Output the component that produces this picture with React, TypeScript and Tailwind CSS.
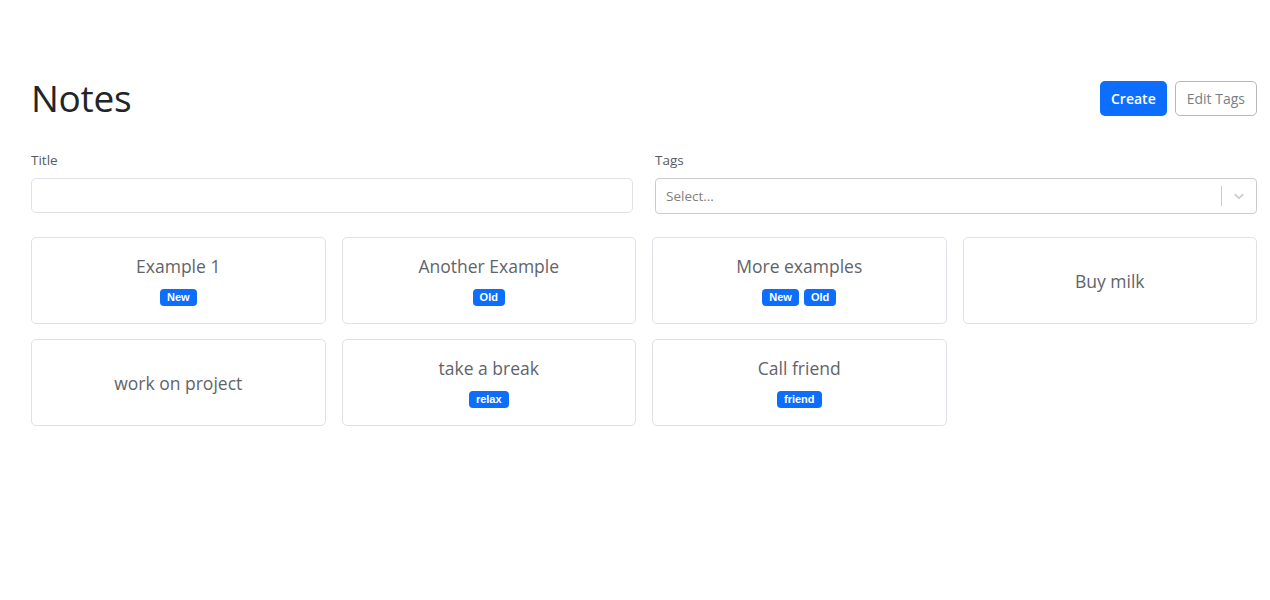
import React from "react";

type Note = { title: string; tags: string[] };

const notes: Note[] = [
  { title: "Example 1", tags: ["New"] },
  { title: "Another Example", tags: ["Old"] },
  { title: "More examples", tags: ["New", "Old"] },
  { title: "Buy milk", tags: [] },
  { title: "work on project", tags: [] },
  { title: "take a break", tags: ["relax"] },
  { title: "Call friend", tags: ["friend"] },
];

export default function App() {
  return (
    <div
      className="min-h-[600px] bg-white text-[#212529]"
      style={{ fontFamily: '"Open Sans", "Noto Sans", sans-serif' }}
    >
      <div className="px-[31px] pt-[74px] pr-[13px]">
        <div className="flex items-center justify-between h-[48px]">
          <h1 className="text-[37px] leading-[48px] font-normal text-[#212529] tracking-[-0.3px]">
            Notes
          </h1>
          <div className="flex gap-[8px]">
            <button className="h-[35px] px-[11px] rounded-[5px] bg-[#0d6efd] text-white text-[14px] font-semibold">
              Create
            </button>
            <button className="h-[35px] px-[11px] rounded-[5px] border border-[#b4b8bc] text-[#7a7f84] text-[14px] bg-white">
              Edit Tags
            </button>
          </div>
        </div>

        <div className="grid grid-cols-2 gap-[22px] mt-[28px]">
          <div>
            <div className="text-[13.5px] leading-[21px] text-[#555b61] mb-[7px]">Title</div>
            <div className="h-[35px] rounded-[5px] border border-[#dee2e6] bg-white" />
          </div>
          <div>
            <div className="text-[13.5px] leading-[21px] text-[#555b61] mb-[7px]">Tags</div>
            <div className="h-[36px] rounded-[4px] border border-[#cccccc] bg-white flex items-center">
              <div className="flex-1 pl-[10px] text-[13.5px] text-[#808080]">Select...</div>
              <div className="w-px h-[20px] bg-[#cccccc]" />
              <div className="w-[34px] flex items-center justify-center text-[#cccccc]">
                <svg width="16" height="16" viewBox="0 0 20 20" fill="currentColor">
                  <path d="M4.516 7.548c0.436-0.446 1.043-0.481 1.576 0l3.908 3.747 3.908-3.747c0.533-0.481 1.141-0.446 1.574 0 0.436 0.445 0.408 1.197 0 1.615-0.406 0.418-4.695 4.502-4.695 4.502-0.217 0.223-0.502 0.335-0.787 0.335s-0.57-0.112-0.789-0.335c0 0-4.287-4.084-4.695-4.502s-0.436-1.17 0-1.615z" />
                </svg>
              </div>
            </div>
          </div>
        </div>

        <div className="grid grid-cols-4 gap-x-[16px] gap-y-[15px] mt-[23px]">
          {notes.map((n) => (
            <div
              key={n.title}
              className="h-[87px] rounded-[5px] border border-[#dee2e6] bg-white flex flex-col items-center justify-center"
            >
              <div className="text-[17.5px] leading-[22px] text-[#5f6469]">{n.title}</div>
              {n.tags.length > 0 && (
                <div className="flex gap-[5px] mt-[12px]">
                  {n.tags.map((t) => (
                    <span
                      key={t}
                      className="h-[17px] px-[7px] rounded-[4px] bg-[#0d6efd] text-white text-[11px] font-bold leading-[17px]"
                      style={{ fontFamily: '"Liberation Sans", Arial, sans-serif' }}
                    >
                      {t}
                    </span>
                  ))}
                </div>
              )}
            </div>
          ))}
        </div>
      </div>
    </div>
  );
}
